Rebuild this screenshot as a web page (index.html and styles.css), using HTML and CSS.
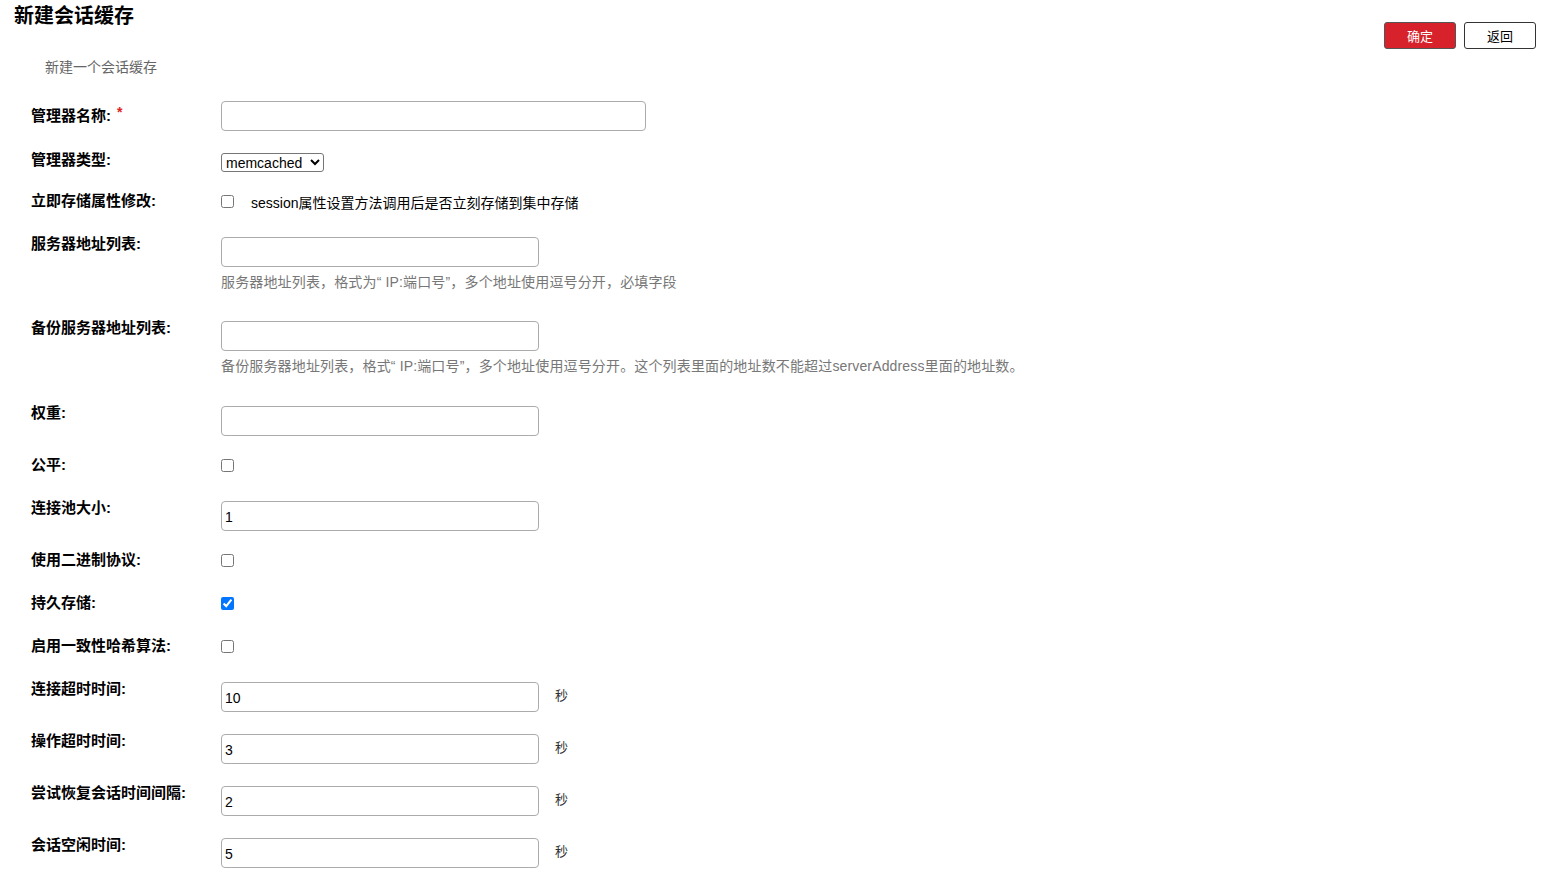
FILE: index.html
```html
<!DOCTYPE html>
<html lang="zh-CN">
<head>
<meta charset="utf-8">
<title>新建会话缓存</title>
<link rel="stylesheet" href="styles.css">
</head>
<body>
<div class="header">
  <div class="head-text">
    <h1 class="title">新建会话缓存</h1>
    <p class="subtitle">新建一个会话缓存</p>
  </div>
  <div class="actions">
    <button class="btn btn-primary" type="button">确定</button>
    <button class="btn btn-default" type="button">返回</button>
  </div>
</div>

<form class="form">
  <div class="row row-first">
    <label class="label">管理器名称:<sup class="req">*</sup></label>
    <div class="field"><input class="text wide" type="text"></div>
  </div>

  <div class="row row-select">
    <label class="label">管理器类型:</label>
    <div class="field"><select class="select"><option>memcached</option></select></div>
  </div>

  <div class="row">
    <label class="label">立即存储属性修改:</label>
    <div class="field check-field"><input class="check" type="checkbox"><span class="check-desc">session属性设置方法调用后是否立刻存储到集中存储</span></div>
  </div>

  <div class="row">
    <label class="label">服务器地址列表:</label>
    <div class="field">
      <input class="text" type="text">
      <div class="help">服务器地址列表，格式为“ IP:端口号”，多个地址使用逗号分开，必填字段</div>
    </div>
  </div>

  <div class="row row-help-last">
    <label class="label">备份服务器地址列表:</label>
    <div class="field">
      <input class="text" type="text">
      <div class="help">备份服务器地址列表，格式“ IP:端口号”，多个地址使用逗号分开。这个列表里面的地址数不能超过serverAddress里面的地址数。</div>
    </div>
  </div>

  <div class="row">
    <label class="label">权重:</label>
    <div class="field"><input class="text" type="text"></div>
  </div>

  <div class="row">
    <label class="label">公平:</label>
    <div class="field"><input class="check" type="checkbox"></div>
  </div>

  <div class="row">
    <label class="label">连接池大小:</label>
    <div class="field"><input class="text" type="text" value="1"></div>
  </div>

  <div class="row">
    <label class="label">使用二进制协议:</label>
    <div class="field"><input class="check" type="checkbox"></div>
  </div>

  <div class="row">
    <label class="label">持久存储:</label>
    <div class="field"><input class="check" type="checkbox" checked></div>
  </div>

  <div class="row">
    <label class="label">启用一致性哈希算法:</label>
    <div class="field"><input class="check" type="checkbox"></div>
  </div>

  <div class="row">
    <label class="label">连接超时时间:</label>
    <div class="field unit-field"><input class="text" type="text" value="10"><span class="unit">秒</span></div>
  </div>

  <div class="row">
    <label class="label">操作超时时间:</label>
    <div class="field unit-field"><input class="text" type="text" value="3"><span class="unit">秒</span></div>
  </div>

  <div class="row">
    <label class="label">尝试恢复会话时间间隔:</label>
    <div class="field unit-field"><input class="text" type="text" value="2"><span class="unit">秒</span></div>
  </div>

  <div class="row">
    <label class="label">会话空闲时间:</label>
    <div class="field unit-field"><input class="text" type="text" value="5"><span class="unit">秒</span></div>
  </div>
</form>
</body>
</html>
```

FILE: styles.css
```css
html, body {
  margin: 0;
  padding: 0;
  background: #fff;
}

body {
  font-family: "Liberation Sans", "Noto Sans CJK SC", sans-serif;
  color: #000;
  font-size: 14px;
}

.header {
  display: flex;
  justify-content: space-between;
  align-items: flex-start;
  padding: 0 21px 0 14px;
}

.title {
  margin: 0;
  font-size: 20px;
  line-height: 33px;
  font-weight: bold;
  color: #000;
}

.subtitle {
  margin: 24px 0 0 31px;
  font-size: 14px;
  line-height: 20px;
  color: #666;
}

.actions {
  display: flex;
  gap: 8px;
  margin-top: 22px;
}

.btn {
  width: 72px;
  height: 27px;
  border-radius: 3px;
  font-family: "Liberation Sans", "Noto Sans CJK SC", sans-serif;
  font-size: 13px;
  padding: 0;
  cursor: pointer;
}

.btn-primary {
  background: #d7222b;
  border: 1px solid #555;
  color: #fff;
}

.btn-default {
  background: #fff;
  border: 1px solid #333;
  color: #000;
}

.form {
  margin: 24px 0 0 31px;
}

.row {
  display: flex;
  align-items: flex-start;
  min-height: 24px;
  padding-bottom: 19px;
}

.row-select {
  min-height: 22px;
}

.row-help-last {
  padding-bottom: 20px;
}

.label {
  width: 190px;
  flex: none;
  font-size: 15px;
  font-weight: bold;
  line-height: 20px;
  color: #000;
}

.row-first .label {
  padding-top: 5px;
}

.req {
  color: #e02020;
  font-size: 14px;
  vertical-align: top;
  line-height: 12px;
  margin-left: 6px;
  position: relative;
  top: 0;
}

.field {
  flex: 1;
}

.text {
  display: block;
  box-sizing: border-box;
  width: 318px;
  height: 30px;
  margin: 3px 0 0 0;
  padding: 2px 3px 0;
  border: 1px solid #ababab;
  border-radius: 4px;
  font-family: "Liberation Sans", "Noto Sans CJK SC", sans-serif;
  font-size: 14px;
  color: #000;
  background: #fff;
}

.row-first .text {
  margin-top: 0;
}

.wide {
  width: 425px;
}

.select {
  margin: 3px 0 0 0;
  height: 19px;
  width: 103px;
  font-family: "Liberation Sans", "Noto Sans CJK SC", sans-serif;
  font-size: 14px;
  border: 1px solid #767676;
  border-radius: 3px;
  padding: 0;
  background: #fff;
  color: #000;
}

.check {
  width: 13px;
  height: 13px;
  margin: 4px 0 0 0;
  display: block;
}

.check-field {
  display: flex;
  align-items: flex-start;
}

.check-desc {
  margin-left: 17px;
  margin-top: 2px;
  font-size: 14px;
  line-height: 20px;
  color: #000;
}

.help {
  margin-top: 5px;
  margin-bottom: 7px;
  font-size: 14px;
  line-height: 20px;
  color: #777;
  letter-spacing: 0.15px;
}

.unit-field {
  display: flex;
  align-items: flex-start;
}

.unit {
  margin-left: 16px;
  margin-top: 9px;
  font-size: 13px;
  line-height: 16px;
  color: #333;
}
```
